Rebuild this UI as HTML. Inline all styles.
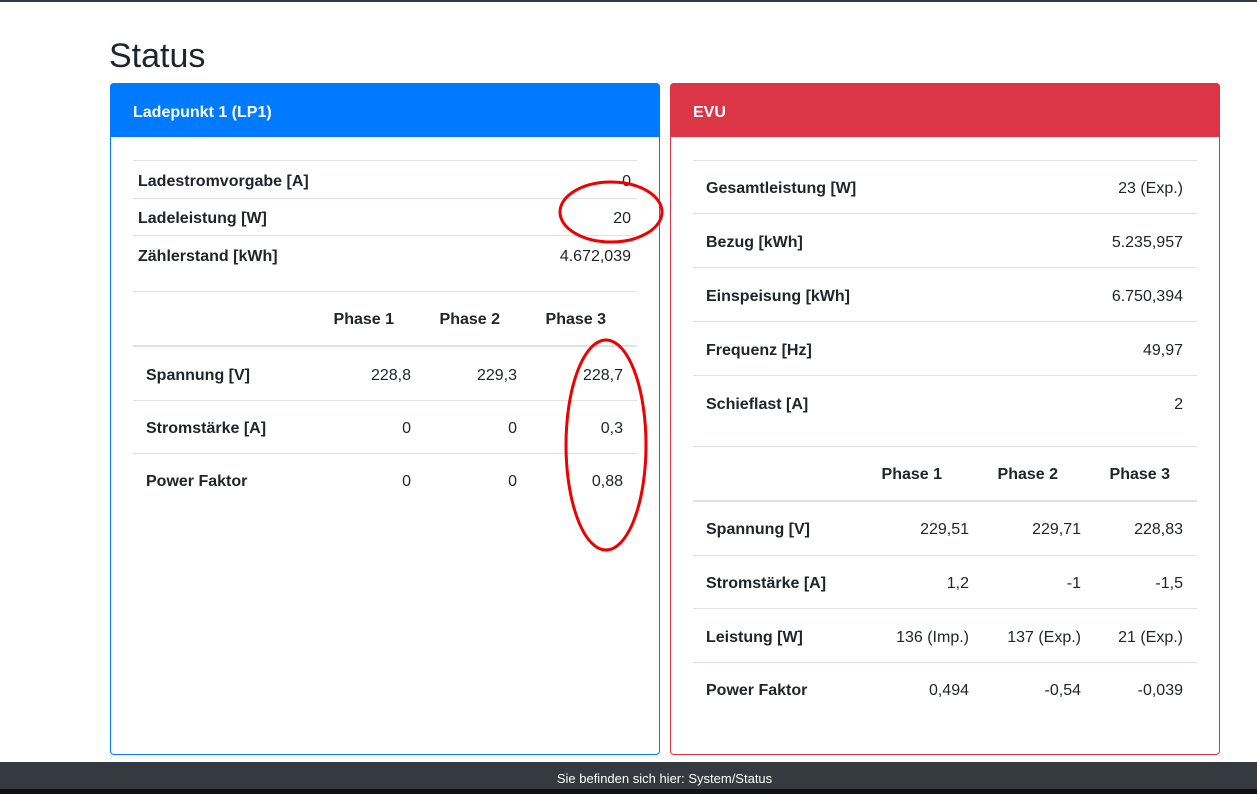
<!DOCTYPE html>
<html><head><meta charset="utf-8"><style>
html,body{margin:0;padding:0;}
body{width:1257px;height:794px;position:relative;overflow:hidden;background:#fff;font-family:"Liberation Sans",sans-serif;color:#212529;font-size:16px;}
.a{position:absolute;line-height:20px;white-space:nowrap;margin-top:2px;}
.b{font-weight:bold;}
.h{position:absolute;height:1px;background:#dee2e6;}
.hh{position:absolute;height:2px;background:#dee2e6;}
</style></head><body>
<div style="position:absolute;left:0;top:0;width:1257px;height:2px;background:#343a40"></div>
<div class="a" style="left:109px;top:37px;font-size:34px;line-height:38px;margin-top:0">Status</div>

<!-- left card -->
<div style="position:absolute;left:110px;top:83px;width:548px;height:670px;border:1px solid #007bff;border-radius:4px;"></div>
<div style="position:absolute;left:110px;top:83px;width:550px;height:54px;background:#007bff;border-radius:4px 4px 0 0;"></div>
<div class="a b" style="left:133px;top:101px;color:#fff;">Ladepunkt 1 (LP1)</div>
<div class="h" style="left:133px;top:160px;width:504px"></div>
<div class="h" style="left:133px;top:198px;width:504px"></div>
<div class="h" style="left:133px;top:235px;width:504px"></div>
<div class="h" style="left:133px;top:291px;width:504px"></div>
<div class="hh" style="left:133px;top:345px;width:504px"></div>
<div class="h" style="left:133px;top:400px;width:504px"></div>
<div class="h" style="left:133px;top:453px;width:504px"></div>
<div class="a b" style="left:138px;top:170px">Ladestromvorgabe [A]</div>
<div class="a b" style="left:138px;top:207px">Ladeleistung [W]</div>
<div class="a b" style="left:138px;top:245px">Zählerstand [kWh]</div>
<div class="a" style="right:626px;top:170px">0</div>
<div class="a" style="right:626px;top:207px">20</div>
<div class="a" style="right:626px;top:245px">4.672,039</div>
<div class="a b" style="right:863px;top:308px">Phase 1</div>
<div class="a b" style="right:757px;top:308px">Phase 2</div>
<div class="a b" style="right:651px;top:308px">Phase 3</div>
<div class="a b" style="left:146px;top:364px">Spannung [V]</div>
<div class="a b" style="left:146px;top:417px">Stromstärke [A]</div>
<div class="a b" style="left:146px;top:470px">Power Faktor</div>
<div class="a" style="right:846px;top:364px">228,8</div>
<div class="a" style="right:740px;top:364px">229,3</div>
<div class="a" style="right:634px;top:364px">228,7</div>
<div class="a" style="right:846px;top:417px">0</div>
<div class="a" style="right:740px;top:417px">0</div>
<div class="a" style="right:634px;top:417px">0,3</div>
<div class="a" style="right:846px;top:470px">0</div>
<div class="a" style="right:740px;top:470px">0</div>
<div class="a" style="right:634px;top:470px">0,88</div>

<!-- right card -->
<div style="position:absolute;left:670px;top:83px;width:548px;height:670px;border:1px solid #dc3545;border-radius:4px;"></div>
<div style="position:absolute;left:670px;top:83px;width:550px;height:54px;background:#dc3545;border-radius:4px 4px 0 0;"></div>
<div class="a b" style="left:693px;top:101px;color:#fff;">EVU</div>
<div class="h" style="left:693px;top:160px;width:504px"></div>
<div class="h" style="left:693px;top:213px;width:504px"></div>
<div class="h" style="left:693px;top:267px;width:504px"></div>
<div class="h" style="left:693px;top:321px;width:504px"></div>
<div class="h" style="left:693px;top:375px;width:504px"></div>
<div class="h" style="left:693px;top:446px;width:504px"></div>
<div class="hh" style="left:693px;top:500px;width:504px"></div>
<div class="h" style="left:693px;top:555px;width:504px"></div>
<div class="h" style="left:693px;top:608px;width:504px"></div>
<div class="h" style="left:693px;top:662px;width:504px"></div>
<div class="a b" style="left:706px;top:177px">Gesamtleistung [W]</div>
<div class="a b" style="left:706px;top:231px">Bezug [kWh]</div>
<div class="a b" style="left:706px;top:285px">Einspeisung [kWh]</div>
<div class="a b" style="left:706px;top:339px">Frequenz [Hz]</div>
<div class="a b" style="left:706px;top:393px">Schieflast [A]</div>
<div class="a" style="right:74px;top:177px">23 (Exp.)</div>
<div class="a" style="right:74px;top:231px">5.235,957</div>
<div class="a" style="right:74px;top:285px">6.750,394</div>
<div class="a" style="right:74px;top:339px">49,97</div>
<div class="a" style="right:74px;top:393px">2</div>
<div class="a b" style="right:315px;top:463px">Phase 1</div>
<div class="a b" style="right:199px;top:463px">Phase 2</div>
<div class="a b" style="right:87px;top:463px">Phase 3</div>
<div class="a b" style="left:706px;top:518px">Spannung [V]</div>
<div class="a b" style="left:706px;top:572px">Stromstärke [A]</div>
<div class="a b" style="left:706px;top:626px">Leistung [W]</div>
<div class="a b" style="left:706px;top:679px">Power Faktor</div>
<div class="a" style="right:288px;top:518px">229,51</div>
<div class="a" style="right:176px;top:518px">229,71</div>
<div class="a" style="right:74px;top:518px">228,83</div>
<div class="a" style="right:288px;top:572px">1,2</div>
<div class="a" style="right:176px;top:572px">-1</div>
<div class="a" style="right:74px;top:572px">-1,5</div>
<div class="a" style="right:288px;top:626px">136 (Imp.)</div>
<div class="a" style="right:176px;top:626px">137 (Exp.)</div>
<div class="a" style="right:74px;top:626px">21 (Exp.)</div>
<div class="a" style="right:288px;top:679px">0,494</div>
<div class="a" style="right:176px;top:679px">-0,54</div>
<div class="a" style="right:74px;top:679px">-0,039</div>

<svg style="position:absolute;left:0;top:0" width="1257" height="794">
<ellipse cx="611" cy="212" rx="51" ry="30" fill="none" stroke="#e00" stroke-width="3"/>
<ellipse cx="606" cy="445" rx="40" ry="105" fill="none" stroke="#e00" stroke-width="3"/>
</svg>

<div style="position:absolute;left:0;top:762px;width:1257px;height:27px;background:#343a40;"></div>
<div class="a" style="left:0;width:1329px;text-align:center;top:769px;color:#fff;font-size:13px;line-height:18px;margin-top:1px">Sie befinden sich hier: System/Status</div>
<div style="position:absolute;left:0;top:789px;width:1257px;height:5px;background:#111;"></div>
</body></html>
